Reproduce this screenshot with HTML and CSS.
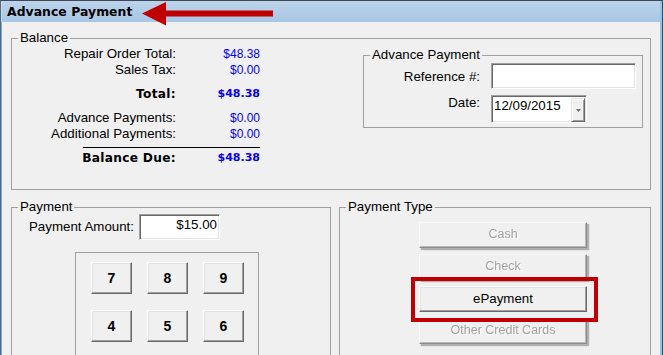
FILE: index.html
```html
<!DOCTYPE html>
<html>
<head>
<meta charset="utf-8">
<link rel="stylesheet" href="styles.css">
</head>
<body>
<div class="window">
  <div class="titlebar">
    <span class="title">Advance Payment</span>
    <svg class="arrow" width="134" height="26" viewBox="0 0 134 26">
      <polygon points="1,11.5 25,0 25,23.5" fill="#c00000"/>
      <rect x="24" y="8.5" width="108" height="6" fill="#c00000"/>
    </svg>
  </div>
  <div class="content">
    <fieldset class="group balance">
      <legend>Balance</legend>
      <div class="balance-body">
        <div class="totals">
          <div class="row"><span class="lbl">Repair Order Total:</span><span class="val">$48.38</span></div>
          <div class="row"><span class="lbl">Sales Tax:</span><span class="val">$0.00</span></div>
          <div class="row bold sep"><span class="lbl">Total:</span><span class="val">$48.38</span></div>
          <div class="row sep"><span class="lbl">Advance Payments:</span><span class="val">$0.00</span></div>
          <div class="row"><span class="lbl">Additional Payments:</span><span class="val">$0.00</span></div>
          <div class="rule"></div>
          <div class="row bold last"><span class="lbl">Balance Due:</span><span class="val">$48.38</span></div>
        </div>
        <fieldset class="group adv">
          <legend>Advance Payment</legend>
          <div class="form">
            <span class="flabel first">Reference #:</span>
            <div class="input ref"></div>
            <span class="flabel">Date:</span>
            <div class="input date">
              <span class="datetext">12/09/2015</span>
              <span class="dd"><svg width="5" height="3" viewBox="0 0 5 3"><polygon points="0,0 5,0 2.5,3" fill="#6d6d6d"/></svg></span>
            </div>
          </div>
        </fieldset>
      </div>
    </fieldset>
    <div class="bottom">
      <fieldset class="group payment">
        <legend>Payment</legend>
        <div class="amount">
          <span class="alabel">Payment Amount:</span>
          <div class="input amt">$15.00</div>
        </div>
        <div class="keypad">
          <div class="key">7</div>
          <div class="key">8</div>
          <div class="key">9</div>
          <div class="key">4</div>
          <div class="key">5</div>
          <div class="key">6</div>
        </div>
      </fieldset>
      <fieldset class="group ptype">
        <legend>Payment Type</legend>
        <div class="types">
          <div class="tbtn disabled">Cash</div>
          <div class="tbtn disabled">Check</div>
          <div class="hl-wrap">
            <div class="tbtn">ePayment</div>
          </div>
          <div class="tbtn disabled">Other Credit Cards</div>
        </div>
        <div class="highlight"></div>
      </fieldset>
    </div>
  </div>
</div>
</body>
</html>
```
FILE: styles.css
```css
html, body {
  margin: 0;
  padding: 0;
  background: #f0f0f0;
  overflow: hidden;
}
body {
  font-family: "Liberation Sans", Arial, sans-serif;
  font-size: 13.3px;
  color: #000;
}
.window {
  width: 663px;
  height: 355px;
  box-sizing: border-box;
  border-top: 1px solid #3f4a56;
  border-left: 1px solid #55697f;
  border-right: 1px solid #3f4a56;
  overflow: hidden;
  background: #f0f0f0;
}
.titlebar {
  position: relative;
  height: 21px;
  border-left: 1px solid #c9dbee;
  border-right: 2px solid #8cc8ec;
  background: linear-gradient(#bcd3eb, #a8c6e5);
  padding-left: 5px;
  line-height: 21px;
}
.title {
  font-family: "DejaVu Sans", Verdana, sans-serif;
  font-weight: bold;
  font-size: 12.4px;
  letter-spacing: 0.05px;
}
.arrow {
  position: absolute;
  left: 139px;
  top: 1px;
}
.content {
  border-left: 1px solid #7ea8d4;
  border-right: 2px solid #8cc8ec;
  height: 340px;
  background: #f0f0f0;
  padding-top: 9px;
}
.group {
  margin: 0;
  padding: 0;
  border: 1px solid #a0a0a0;
  min-inline-size: 0;
}
.group > legend {
  margin-left: 6px;
  padding: 0 2px;
  line-height: 14px;
  font-size: 13.3px;
}
.balance {
  margin: 0 9px;
}
.balance-body {
  display: flex;
  align-items: flex-start;
  padding-top: 1px;
  padding-bottom: 23px;
}
.totals {
  width: 260px;
}
.row {
  display: flex;
  height: 16px;
  line-height: 16px;
}
.row .lbl {
  width: 164px;
  text-align: right;
}
.row .val {
  width: 84px;
  text-align: right;
  color: #0000ff;
  font-size: 12px;
}
.row.bold .lbl,
.row.bold .val {
  font-family: "DejaVu Sans", Verdana, sans-serif;
  font-weight: bold;
}
.row.bold .lbl {
  font-size: 12.2px;
  letter-spacing: 0.3px;
}
.row.bold .val {
  font-size: 11px;
  color: #0000ee;
}
.row.sep {
  margin-top: 8px;
}
.rule {
  margin: 5px 0 0 71px;
  width: 177px;
  height: 1px;
  background: #000;
}
.row.last {
  margin-top: 2px;
}
.adv {
  margin: 2px 7px 0 auto;
  width: 280px;
  box-sizing: border-box;
}
.form {
  display: grid;
  grid-template-columns: 116px 145px;
  column-gap: 11px;
  row-gap: 6px;
  padding: 1px 0 4px 0;
  align-items: start;
}
.flabel {
  text-align: right;
  line-height: 16px;
}
.flabel.first {
  padding-top: 6px;
}
.input {
  box-sizing: border-box;
  background: #fff;
  border: 1px solid;
  border-color: #a0a0a0 #ffffff #ffffff #a0a0a0;
  box-shadow: inset 1px 1px 0 #696969, inset -1px -1px 0 #e3e3e3;
}
.ref {
  height: 26px;
}
.date {
  width: 96px;
  height: 28px;
  display: flex;
  align-items: flex-start;
  padding: 2px 1px 1px 2px;
}
.datetext {
  line-height: 16px;
}
.dd {
  margin-left: auto;
  width: 14px;
  height: 24px;
  box-sizing: border-box;
  background: #f0f0f0;
  border: 1px solid;
  border-color: #e3e3e3 #696969 #696969 #e3e3e3;
  box-shadow: inset 1px 1px 0 #ffffff, inset -1px -1px 0 #a0a0a0;
  display: flex;
  align-items: center;
  justify-content: center;
}
.bottom {
  display: flex;
  margin: 10px 9px 0 9px;
}
.payment {
  width: 320px;
  height: 220px;
  box-sizing: border-box;
}
.ptype {
  position: relative;
  width: 312px;
  height: 220px;
  box-sizing: border-box;
  margin-left: 8px;
}
.amount {
  display: flex;
  align-items: center;
  margin-left: 17px;
}
.alabel {
  width: 110px;
  line-height: 16px;
}
.amt {
  width: 81px;
  height: 26px;
  text-align: right;
  padding: 2px 2px 0 0;
  line-height: 16px;
}
.keypad {
  margin: 12px 0 0 63px;
  width: 184px;
  height: 120px;
  box-sizing: border-box;
  border: 1px solid #a0a0a0;
  padding: 9px 14px 0 15px;
  display: grid;
  grid-template-columns: repeat(3, 41px);
  grid-auto-rows: 32px;
  column-gap: 15px;
  row-gap: 16px;
}
.key {
  box-sizing: border-box;
  background: #f0f0f0;
  border: 1px solid;
  border-color: #ffffff #696969 #696969 #ffffff;
  box-shadow: inset -1px -1px 0 #a0a0a0, inset 1px 1px 0 #e3e3e3;
  display: flex;
  align-items: center;
  justify-content: center;
  font-weight: bold;
  font-size: 14px;
}
.types {
  display: flex;
  flex-direction: column;
  align-items: flex-start;
  gap: 6px;
  padding-top: 8px;
  margin-left: 79px;
}
.tbtn {
  width: 168px;
  height: 26px;
  box-sizing: border-box;
  background: #f0f0f0;
  border: 1px solid;
  border-color: #ffffff #696969 #696969 #ffffff;
  box-shadow: inset -1px -1px 0 #a0a0a0, inset 1px 1px 0 #e3e3e3;
  text-align: center;
  line-height: 23px;
}
.tbtn.disabled {
  color: #a0a0a0;
  text-shadow: 1px 1px 0 #ffffff;
  border-color: #f8f8f8 #8a8a8a #8a8a8a #f8f8f8;
  box-shadow: 2px 2px 1px #b0b0b0, inset -1px -1px 0 #b8b8b8;
  filter: blur(0.7px);
  font-size: 12.5px;
}
.hl-wrap {
  width: 168px;
  height: 26px;
}
.highlight {
  position: absolute;
  z-index: 5;
  left: 71px;
  top: 63px;
  width: 187px;
  height: 45px;
  box-sizing: border-box;
  border: 4px solid #c00000;
}
```
